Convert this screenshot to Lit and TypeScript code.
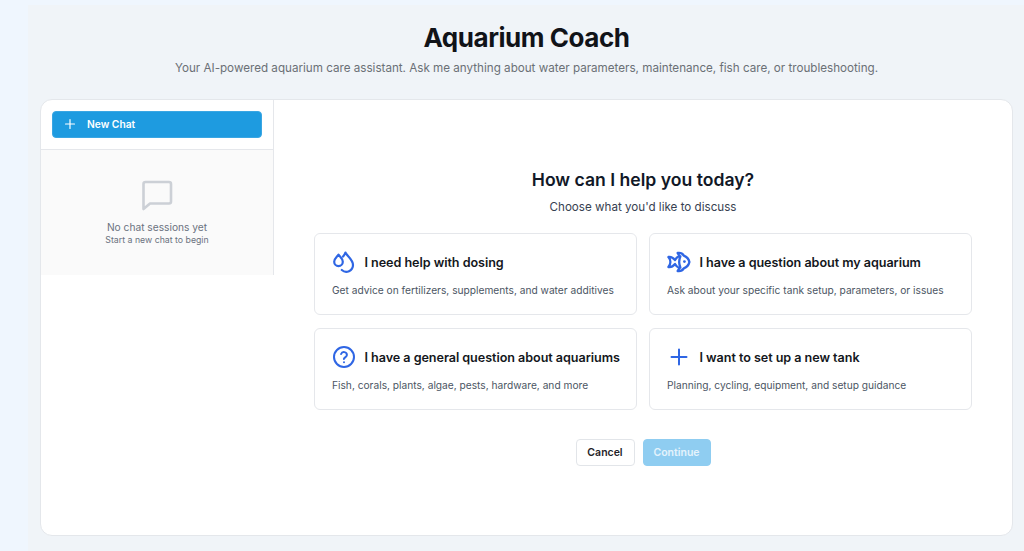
import { LitElement, html, css, svg } from "lit";
import { customElement } from "lit/decorators.js";

const ICON_DROPS = svg`<g stroke-width="2.2"><path d="M6.5 4.6 C5 6.8 2.2 8.4 2.2 11.8 a4.3 4.3 0 0 0 8.6 0 C10.8 8.4 8 6.8 6.5 4.6 Z"/><path d="M13.4 2.6 C12.8 4.4 11.8 5.6 11 6.6 M13.4 2.6 C15.4 6.4 21 9.4 21 15 a6.7 6.7 0 0 1 -11.2 5"/></g>`;
const ICON_FISH = svg`<g stroke-width="2.3"><path d="M1.4 7 C4 6.6 6.4 8 8 10 C9 8 10.4 6.8 12.4 6 L10.6 3 C13.2 2.6 15.6 3.6 16.8 5.6 C19.8 6.8 21.8 9.2 22.4 12 C21.8 14.8 19.8 17.2 16.8 18.4 C15.6 20.4 13.2 21.4 10.6 21 L12.4 18 C10.4 17.2 9 16 8 14 C6.4 16 4 17.4 1.4 17 C2.8 15.4 3.4 13.8 3.4 12 C3.4 10.2 2.8 8.6 1.4 7 Z"/><path d="M13.4 6.4 C12 9.6 12 14.4 13.4 17.6"/></g><circle cx="17.4" cy="11.6" r="1.4" fill="currentColor" stroke="none"/>`;
const ICON_HELP = svg`<circle cx="12" cy="12" r="10"/><path d="M9.1 9 a3 3 0 0 1 5.8 1 c0 2-3 2.6-3 4"/><circle cx="12" cy="17.2" r="1" fill="currentColor" stroke="none"/>`;
const ICON_PLUS = svg`<path d="M12 4.5 V19.5 M4.5 12 H19.5"/>`;

const CARDS = [
  { icon: ICON_DROPS, title: "I need help with dosing", desc: "Get advice on fertilizers, supplements, and water additives" },
  { icon: ICON_FISH, title: "I have a question about my aquarium", desc: "Ask about your specific tank setup, parameters, or issues" },
  { icon: ICON_HELP, title: "I have a general question about aquariums", desc: "Fish, corals, plants, algae, pests, hardware, and more" },
  { icon: ICON_PLUS, title: "I want to set up a new tank", desc: "Planning, cycling, equipment, and setup guidance" },
];

@customElement("app-root")
export class AppRoot extends LitElement {
  static styles = css`
    :host {
      display: block;
      width: 1024px;
      height: 551px;
      overflow: hidden;
      background: #eff6fe;
      font-family: Inter, "Liberation Sans", sans-serif;
      color: #111827;
      -webkit-font-smoothing: antialiased;
    }
    .page {
      box-sizing: border-box;
      height: 551px;
      margin-left: 28px;
      padding: 0 11px 15px 12px;
      background: #f0f4f8;
      display: flex;
      flex-direction: column;
      border-top: 5px solid #eff6fe;
    }
    .head {
      height: 94px;
      flex: none;
      display: flex;
      flex-direction: column;
      align-items: center;
      box-sizing: border-box;
      padding-top: 15px;
    }
    h1 {
      margin: 0;
      font-size: 26px;
      line-height: 36px;
      font-weight: 700;
      letter-spacing: -0.45px;
      color: #111318;
    }
    .sub {
      margin: 3px 0 0;
      font-size: 11.65px;
      line-height: 18px;
      color: #6b7076;
      white-space: nowrap;
    }
    .shell {
      flex: 1;
      min-height: 0;
      display: flex;
      background: #fff;
      border: 1px solid #e4e7eb;
      border-radius: 12px;
      overflow: hidden;
    }
    .side {
      width: 233px;
      flex: none;
      display: flex;
      flex-direction: column;
      align-self: flex-start;
      border-right: 1px solid #e5e7eb;
      box-sizing: border-box;
    }
    .side-top {
      height: 50px;
      box-sizing: border-box;
      padding: 11px 11.5px 0 11px;
      border-bottom: 1px solid #e5e7eb;
    }
    .new {
      display: flex;
      align-items: center;
      gap: 11.5px;
      box-sizing: border-box;
      width: 100%;
      height: 27px;
      padding: 0 0 1px 10.5px;
      background: #1e9be0;
      border: 1px solid #3aa6e3;
      border-radius: 4px;
      color: #fff;
      font: 600 10.25px Inter, sans-serif;
    }
    .new svg { width: 12px; height: 12px; fill: none; stroke: #fff; stroke-width: 1.2; stroke-linecap: round; }
    .empty {
      height: 125px;
      background: #fafafa;
      display: flex;
      flex-direction: column;
      align-items: center;
      padding-top: 28px;
      box-sizing: border-box;
    }
    .empty svg { width: 36px; height: 36px; fill: none; stroke: #ccd0d6; stroke-width: 2.6; stroke-linejoin: round; }
    .e1 { margin-top: 6px; font-size: 10.2px; line-height: 14px; color: #6b7280; }
    .e2 { margin-top: 0; font-size: 8.75px; line-height: 12px; color: #6b7280; }
    .main {
      flex: 1;
      display: flex;
      flex-direction: column;
      align-items: center;
      padding-top: 68px;
      box-sizing: border-box;
      min-width: 0;
    }
    h2 {
      margin: 0;
      font-size: 17.6px;
      line-height: 24px;
      font-weight: 600;
      color: #111827;
    }
    .choose {
      margin: 6px 0 0;
      font-size: 11.63px;
      line-height: 18px;
      color: #374151;
    }
    .grid {
      margin-top: 16.5px;
      display: grid;
      grid-template-columns: 323px 323px;
      grid-auto-rows: 82.5px;
      gap: 12.5px 12px;
    }
    .card {
      box-sizing: border-box;
      border: 1px solid #e5e7eb;
      border-radius: 6px;
      background: #fff;
      padding: 13.5px 17px 0;
    }
    .row { display: flex; align-items: center; gap: 8px; height: 30px; }
    .row svg {
      width: 24px; height: 24px; flex: none;
      fill: none; stroke: #2f66e4; stroke-width: 2; stroke-linecap: round; stroke-linejoin: round;
      color: #2f66e4;
    }
    .t { margin-left: 0.5px; font-size: 12.6px; font-weight: 600; color: #14171c; white-space: nowrap; letter-spacing: -0.05px; }
    .d { margin-top: 6px; font-size: 10.2px; line-height: 14px; color: #4b5563; white-space: nowrap; }
    .actions { margin-top: 29px; display: flex; gap: 8px; }
    .btn {
      box-sizing: border-box;
      height: 26.5px;
      border-radius: 4px;
      font: 600 10.5px Inter, sans-serif;
      display: flex; align-items: center; justify-content: center;
    }
    .cancel { width: 59px; background: #fff; border: 1px solid #e2e5e9; color: #1f2328; }
    .cont { width: 68px; background: #8fcdf1; border: 1px solid #8fcdf1; color: #e4f3fc; }
  `;

  render() {
    return html`
      <div class="page">
        <div class="head">
          <h1>Aquarium Coach</h1>
          <p class="sub">Your AI-powered aquarium care assistant. Ask me anything about water parameters, maintenance, fish care, or troubleshooting.</p>
        </div>
        <div class="shell">
          <aside class="side">
            <div class="side-top">
              <button class="new">
                <svg viewBox="0 0 12 12"><path d="M6 1.5V10.5M1.5 6H10.5"/></svg>
                New Chat
              </button>
            </div>
            <div class="empty">
              <svg viewBox="0 0 36 36"><path d="M4.5 6 a2 2 0 0 1 2-2 H30 a2 2 0 0 1 2 2 V23.5 a2 2 0 0 1-2 2 H11 L4.5 31 Z"/></svg>
              <div class="e1">No chat sessions yet</div>
              <div class="e2">Start a new chat to begin</div>
            </div>
          </aside>
          <main class="main">
            <h2>How can I help you today?</h2>
            <p class="choose">Choose what you'd like to discuss</p>
            <div class="grid">
              ${CARDS.map(c => html`
                <div class="card">
                  <div class="row">
                    <svg viewBox="0 0 24 24">${c.icon}</svg>
                    <span class="t">${c.title}</span>
                  </div>
                  <div class="d">${c.desc}</div>
                </div>`)}
            </div>
            <div class="actions">
              <div class="btn cancel">Cancel</div>
              <div class="btn cont">Continue</div>
            </div>
          </main>
        </div>
      </div>
    `;
  }
}
